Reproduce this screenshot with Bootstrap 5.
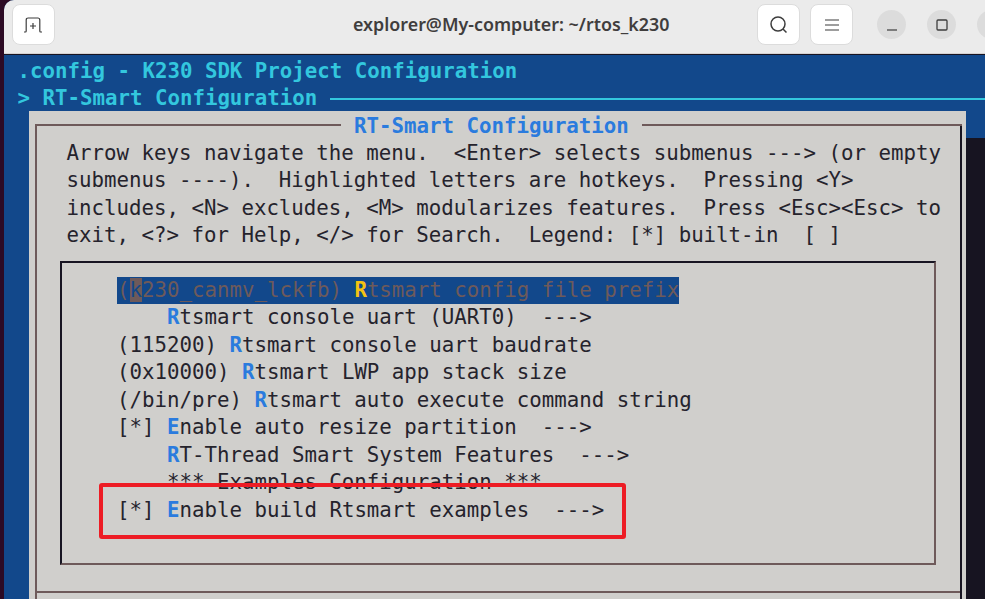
<!DOCTYPE html>
<html lang="en">
<head>
<meta charset="utf-8">
<title>explorer@My-computer: ~/rtos_k230</title>
<link href="https://cdn.jsdelivr.net/npm/bootstrap@5.3.0/dist/css/bootstrap.min.css" rel="stylesheet">
<style>
html,body{height:599px;overflow:hidden;background:#2c0a24;}
.shell{margin-left:4px;width:1100px;height:599px;border-top-left-radius:10px;overflow:hidden;background:#12488b;}
.topbar{height:54px;background:#ebebeb;border-bottom:1px solid #d6d2d2;padding:4px 0 4px 8px;}
.tbtn{width:43px;height:41px;background:#fff;border:1px solid #dcdcdc;border-radius:8px;}
.tbtn svg,.wbtn svg{display:block;}
.ttitle{margin-left:298px;width:320px;font:600 17.85px/41px "Noto Sans",sans-serif;color:#403d3d;white-space:nowrap;}
.rgroup{margin-left:84px;gap:10px;}
.wgroup{margin-left:14px;margin-top:6px;gap:21px;}
.wbtn{width:29px;height:29px;border-radius:50%;background:#dcdcdc;}
.term{border-top:1px solid #171421;height:545px;overflow:hidden;font:20.75px/27.45px "DejaVu Sans Mono",monospace;color:#25232c;padding-top:3px;}
.tl{white-space:pre;}
.thead{padding-left:13.5px;color:#33c7de;font-weight:700;}
.tfill{height:2px;background:#33c7de;margin-left:13px;}
.dlg{margin-top:-2px;margin-left:25px;width:937px;height:600px;background:#d0cfcc;box-shadow:19px 27px 0 #171421;overflow:hidden;}
.frame{margin:13px 0 0 6px;width:927px;height:600px;border-left:2px solid #6e5a5a;border-right:2px solid #171421;}
.ftitle{margin-left:-2px;margin-right:-2px;height:2px;}
.fline{border-top:2px solid #6e5a5a;height:0;}
.fline-a{width:306px;}
.fname{color:#2a7bde;font-weight:700;padding:0 13px;position:relative;top:1.5px;}
.help{padding-left:29.5px;margin-top:14px;}
.ibox{position:relative;margin:11.6px 0 0 23px;width:876px;height:304px;border:2px solid #6e5a5a;border-top-color:#171421;border-left-color:#171421;padding:13.700px 0 0 55px;}
.hl{display:inline-block;background:#12488b;color:#6e5a5a;}
.hl b{color:#f5c211;}
.cur{background:#6e5a5a;color:#12488b;}
.hot{color:#2a7bde;font-weight:700;}
.redbox{position:absolute;left:37px;top:220px;width:527px;height:56px;border:4.500px solid #ed1c24;border-radius:3px;}
.sep{margin-top:26px;margin-left:-2px;border-top:2px solid #6e5a5a;}
</style>
</head>
<body>
<div class="shell">
  <div class="topbar d-flex align-items-start">
    <div class="tbtn d-flex align-items-center justify-content-center">
      <svg width="21" height="16" viewBox="0 0 21 16" fill="none" stroke="#3d3d3d" stroke-width="1.2"><path d="M1 15h1.4q.8 0 .8-1V3q0-2 2-2h9.600q2 0 2 2v11q0 1 .8 1H19"/><path d="M7 9h6M10 6v6"/></svg>
    </div>
    <div class="ttitle">explorer@My-computer: ~/rtos_k230</div>
    <div class="rgroup d-flex align-items-start">
      <div class="tbtn d-flex align-items-center justify-content-center">
        <svg width="20" height="20" viewBox="0 0 20 20" fill="none" stroke="#3d3d3d" stroke-width="1.5"><circle cx="9" cy="9" r="7"/><path d="M14 14l3.500 3.500"/></svg>
      </div>
      <div class="tbtn d-flex align-items-center justify-content-center">
        <svg width="14" height="12" viewBox="0 0 14 12" fill="none" stroke="#3d3d3d" stroke-width="1.2"><path d="M0 1h14M0 6h14M0 11h14"/></svg>
      </div>
      <div class="wgroup d-flex align-items-center">
        <div class="wbtn d-flex align-items-center justify-content-center"><svg width="12" height="12" viewBox="0 0 12 12" stroke="#3d3d3d" stroke-width="1.2"><path d="M1 11h10"/></svg></div>
        <div class="wbtn d-flex align-items-center justify-content-center"><svg width="12" height="12" viewBox="0 0 12 12" fill="none" stroke="#3d3d3d" stroke-width="1.3"><rect x="1" y="1" width="10" height="10" rx="1"/></svg></div>
        <div class="wbtn"></div>
      </div>
    </div>
  </div>
  <div class="term">
    <div class="thead tl">.config - K230 SDK Project Configuration</div>
    <div class="thead d-flex align-items-center"><span class="tl">&gt; RT-Smart Configuration</span><span class="tfill flex-grow-1"></span></div>
    <div class="dlg">
      <div class="frame">
        <div class="ftitle d-flex align-items-center"><span class="fline fline-a flex-shrink-0"></span><span class="fname tl">RT-Smart Configuration</span><span class="fline flex-grow-1"></span></div>
        <div class="help tl">Arrow keys navigate the menu.  &lt;Enter&gt; selects submenus ---&gt; (or empty
submenus ----).  Highlighted letters are hotkeys.  Pressing &lt;Y&gt;
includes, &lt;N&gt; excludes, &lt;M&gt; modularizes features.  Press &lt;Esc&gt;&lt;Esc&gt; to
exit, &lt;?&gt; for Help, &lt;/&gt; for Search.  Legend: [*] built-in  [ ]</div>
        <div class="ibox">
          <div class="tl"><span class="hl">(<span class="cur">k</span>230_canmv_lckfb) <b>R</b>tsmart config file prefix</span></div>
          <div class="tl">    <span class="hot">R</span>tsmart console uart (UART0)  ---&gt;</div>
          <div class="tl">(115200) <span class="hot">R</span>tsmart console uart baudrate</div>
          <div class="tl">(0x10000) <span class="hot">R</span>tsmart LWP app stack size</div>
          <div class="tl">(/bin/pre) <span class="hot">R</span>tsmart auto execute command string</div>
          <div class="tl">[*] <span class="hot">E</span>nable auto resize partition  ---&gt;</div>
          <div class="tl">    <span class="hot">R</span>T-Thread Smart System Features  ---&gt;</div>
          <div class="tl">    *** Examples Configuration ***</div>
          <div class="tl">[*] <span class="hot">E</span>nable build Rtsmart examples  ---&gt;</div>
          <div class="redbox"></div>
        </div>
        <div class="sep"></div>
      </div>
    </div>
  </div>
</div>
</body>
</html>
